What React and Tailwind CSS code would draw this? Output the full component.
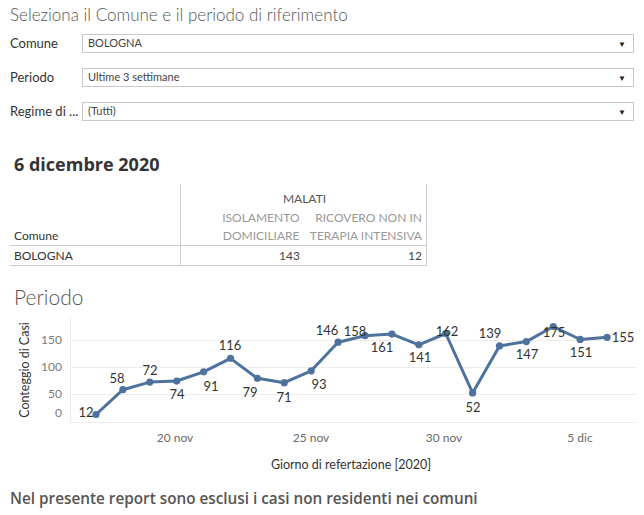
import React from "react";

const values = [12, 58, 72, 74, 91, 116, 79, 71, 93, 146, 158, 161, 141, 162, 52, 139, 147, 175, 151, 155];
const labels = [
  [86, 417, "middle"], [117, 383, "middle"], [150, 375, "middle"], [177, 399, "middle"],
  [211, 391, "middle"], [230, 350, "middle"], [250, 397, "middle"], [284, 402, "middle"],
  [319, 389, "middle"], [327, 335, "middle"], [355, 336, "middle"], [382, 352, "middle"],
  [420, 362, "middle"], [447, 336, "middle"], [473, 412, "middle"], [490, 338, "middle"],
  [527, 359, "middle"], [554, 337, "middle"], [581, 357, "middle"], [623, 342, "middle"],
];

const px = (i) => 96 + i * 26.9;
const py = (v) => 421 - v * 0.54;

function Chart() {
  const pts = values.map((v, i) => `${px(i).toFixed(1)},${py(v).toFixed(1)}`).join(" ");
  return (
    <svg width="644" height="163" viewBox="0 312 644 163" className="block">
      <g stroke="#ececec" strokeWidth="1">
        <line x1="70" y1="340.5" x2="636" y2="340.5" />
        <line x1="70" y1="367.5" x2="636" y2="367.5" />
        <line x1="70" y1="394.5" x2="636" y2="394.5" />
        <line x1="70" y1="422.5" x2="636" y2="422.5" />
        <line x1="70.5" y1="318" x2="70.5" y2="423" />
      </g>
      <g fill="#7a7a7a" fontSize="12" textAnchor="end" fontFamily="Lato, sans-serif">
        <text x="62" y="344">150</text>
        <text x="62" y="371">100</text>
        <text x="62" y="398">50</text>
        <text x="62" y="417">0</text>
      </g>
      <text
        transform="translate(29 370) rotate(-90)"
        textAnchor="middle"
        fontSize="12.5"
        fill="#333"
        fontFamily="Lato, sans-serif"
      >
        Conteggio di Casi
      </text>
      <polyline points={pts} fill="none" stroke="#4e729e" strokeWidth="3" strokeLinejoin="round" />
      {values.map((v, i) => (
        <circle key={i} cx={px(i)} cy={py(v)} r="3.6" fill="#4e729e" />
      ))}
      <g fill="#333" fontSize="13" fontFamily="Lato, sans-serif">
        {values.map((v, i) => (
          <text key={i} x={labels[i][0]} y={labels[i][1]} textAnchor={labels[i][2]}>
            {v}
          </text>
        ))}
      </g>
      <g fill="#6a6a6a" fontSize="12" textAnchor="middle" fontFamily="Lato, sans-serif">
        <text x="175" y="442">20 nov</text>
        <text x="311" y="442">25 nov</text>
        <text x="444" y="442">30 nov</text>
        <text x="580" y="442">5 dic</text>
      </g>
      <text x="351" y="469" textAnchor="middle" fontSize="12.5" fill="#333" fontFamily="Lato, sans-serif">
        Giorno di refertazione [2020]
      </text>
    </svg>
  );
}

function Select({ label, value }) {
  return (
    <div className="flex items-center h-[19px]">
      <div className="w-[82px] pl-[10px] pr-[2px] text-[13px] text-[#333] whitespace-nowrap overflow-hidden">{label}</div>
      <div className="w-[552px] h-[19px] border border-[#c8c8c8] flex items-center justify-between pl-[5px] pr-[7px]">
        <span className="text-[11px] text-[#444]">{value}</span>
        <span className="text-[8px] text-[#222]">▼</span>
      </div>
    </div>
  );
}

export default function App() {
  return (
    <div className="w-[644px] h-[515px] bg-white overflow-hidden" style={{ fontFamily: "Lato, 'Open Sans', sans-serif" }}>
      <div className="pl-[10px] pt-[4px] h-[34px] text-[17px] text-[#555] font-light leading-[22px]">
        Seleziona il Comune e il periodo di riferimento
      </div>
      <div className="flex flex-col gap-[15px]">
        <Select label="Comune" value="BOLOGNA" />
        <Select label="Periodo" value="Ultime 3 settimane" />
        <Select label="Regime di ..." value="(Tutti)" />
      </div>
      <div
        className="pl-[14px] mt-[32px] text-[18px] font-bold text-[#333] leading-[22px]"
        style={{ fontFamily: "'Open Sans', sans-serif" }}
      >
        6 dicembre 2020
      </div>
      <div className="ml-[10px] mt-[9px] w-[417px] grid grid-cols-[171px_123px_123px] text-[12px]">
        <div className="border-r border-[#ccc] h-[61px] flex items-end pl-[4px] pb-[0px] text-[#333] leading-[18px]">Comune</div>
        <div className="col-span-2 border-r border-[#ccc] h-[61px] flex flex-col">
          <div className="h-[24px] flex items-end justify-center text-[#555] pl-[2px]">MALATI</div>
          <div className="flex flex-1 text-[#999] leading-[18px]">
            <div className="w-[123px] text-right pr-[4px] pt-[1px]">ISOLAMENTO<br />DOMICILIARE</div>
            <div className="w-[123px] text-right pr-[4px] pt-[1px] whitespace-nowrap">RICOVERO NON IN<br />TERAPIA INTENSIVA</div>
          </div>
        </div>
        <div className="border-t border-b border-r border-[#ccc] h-[21px] flex items-center pl-[4px] text-[#333]">BOLOGNA</div>
        <div className="border-t border-b border-[#ccc] h-[21px] flex items-center justify-end pr-[4px] text-[#444]">143</div>
        <div className="border-t border-b border-r border-[#ccc] h-[21px] flex items-center justify-end pr-[4px] text-[#444]">12</div>
      </div>
      <div className="pl-[14px] mt-[19px] text-[21px] font-light text-[#555] leading-[24px]">Periodo</div>
      <div className="mt-[3px]">
        <Chart />
      </div>
      <div
        className="pl-[10px] mt-[13px] text-[15.3px] font-semibold text-[#555] leading-[20px]"
        style={{ fontFamily: "'Open Sans', sans-serif" }}
      >
        Nel presente report sono esclusi i casi non residenti nei comuni
      </div>
    </div>
  );
}
